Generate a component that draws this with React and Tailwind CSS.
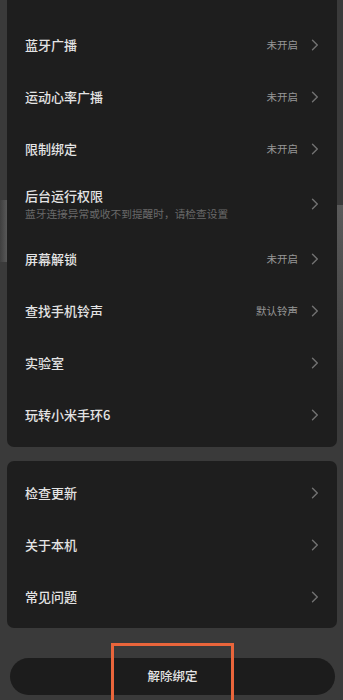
import React from "react";

const MAIN_ITEMS = [
  { title: "蓝牙广播", value: "未开启" },
  { title: "运动心率广播", value: "未开启" },
  { title: "限制绑定", value: "未开启" },
  {
    title: "后台运行权限",
    desc: "蓝牙连接异常或收不到提醒时，请检查设置",
  },
  { title: "屏幕解锁", value: "未开启" },
  { title: "查找手机铃声", value: "默认铃声" },
  { title: "实验室" },
  { title: "玩转小米手环6" },
];

const ABOUT_ITEMS = [
  { title: "检查更新" },
  { title: "关于本机" },
  { title: "常见问题" },
];

// ----------------------------
// Chevron
// ----------------------------

function Chevron() {
  return (
    <svg width="8" height="12" viewBox="0 0 8 12" fill="none" className="shrink-0">
      <path
        d="M1.5 1.2 L6.3 6 L1.5 10.8"
        stroke="#727272"
        strokeWidth="1.4"
        strokeLinecap="round"
        strokeLinejoin="round"
      />
    </svg>
  );
}

// ----------------------------
// Row
// ----------------------------

function Row({ item }) {
  return (
    <div
      className={`flex items-center pl-[18px] pr-[18px] ${
        item.desc ? "h-[58px]" : "h-[52px]"
      }`}
    >
      <div className="flex-1 min-w-0">
        <div className="text-[13px] leading-[18px] font-medium text-[#e4e4e4]">
          {item.title}
        </div>

        {item.desc && (
          <div className="mt-[2px] text-[10.7px] leading-[14px] text-[#6a6a6a]">
            {item.desc}
          </div>
        )}
      </div>

      {item.value && (
        <span className="mr-[13px] text-[10.5px] text-[#979797]">
          {item.value}
        </span>
      )}

      <Chevron />
    </div>
  );
}

export default function App() {
  return (
    <div
      className="relative h-[700px] overflow-hidden bg-[#3a3a3a] pl-[7px] pr-[6px] flex flex-col"
      style={{ fontFamily: '"Noto Sans CJK SC", "Noto Sans", sans-serif' }}
    >

      {/* BACKDROP EDGE GLOW */}

      <div className="absolute left-0 top-[200px] w-[7px] h-[62px] bg-gradient-to-r from-[#3f3f3f] to-[#585858]" />
      <div className="absolute right-0 top-[205px] w-[6px] h-[200px] bg-gradient-to-b from-[#5a5a5a] to-[#3a3a3a]" />


      {/* SETTINGS CARD */}

      <div className="relative bg-[#1e1e1e] rounded-b-[7px] pt-[19px] pb-[6px]">
        {MAIN_ITEMS.map((item) => (
          <Row key={item.title} item={item} />
        ))}
      </div>


      {/* ABOUT CARD */}

      <div className="mt-[14px] bg-[#1e1e1e] rounded-[7px] pt-[6px] pb-[5px]">
        {ABOUT_ITEMS.map((item) => (
          <Row key={item.title} item={item} />
        ))}
      </div>


      {/* UNBIND BUTTON */}

      <button className="mt-[30px] ml-[3px] mr-[2px] h-[37px] rounded-full bg-[#1c1c1c] text-[12.5px] font-medium text-[#e4e4e4]">
        解除绑定
      </button>


      {/* HIGHLIGHT BOX */}

      <div className="absolute left-[111px] top-[643px] w-[123px] h-[70px] border-[3px] border-[#e9653b]" />

    </div>
  );
}
